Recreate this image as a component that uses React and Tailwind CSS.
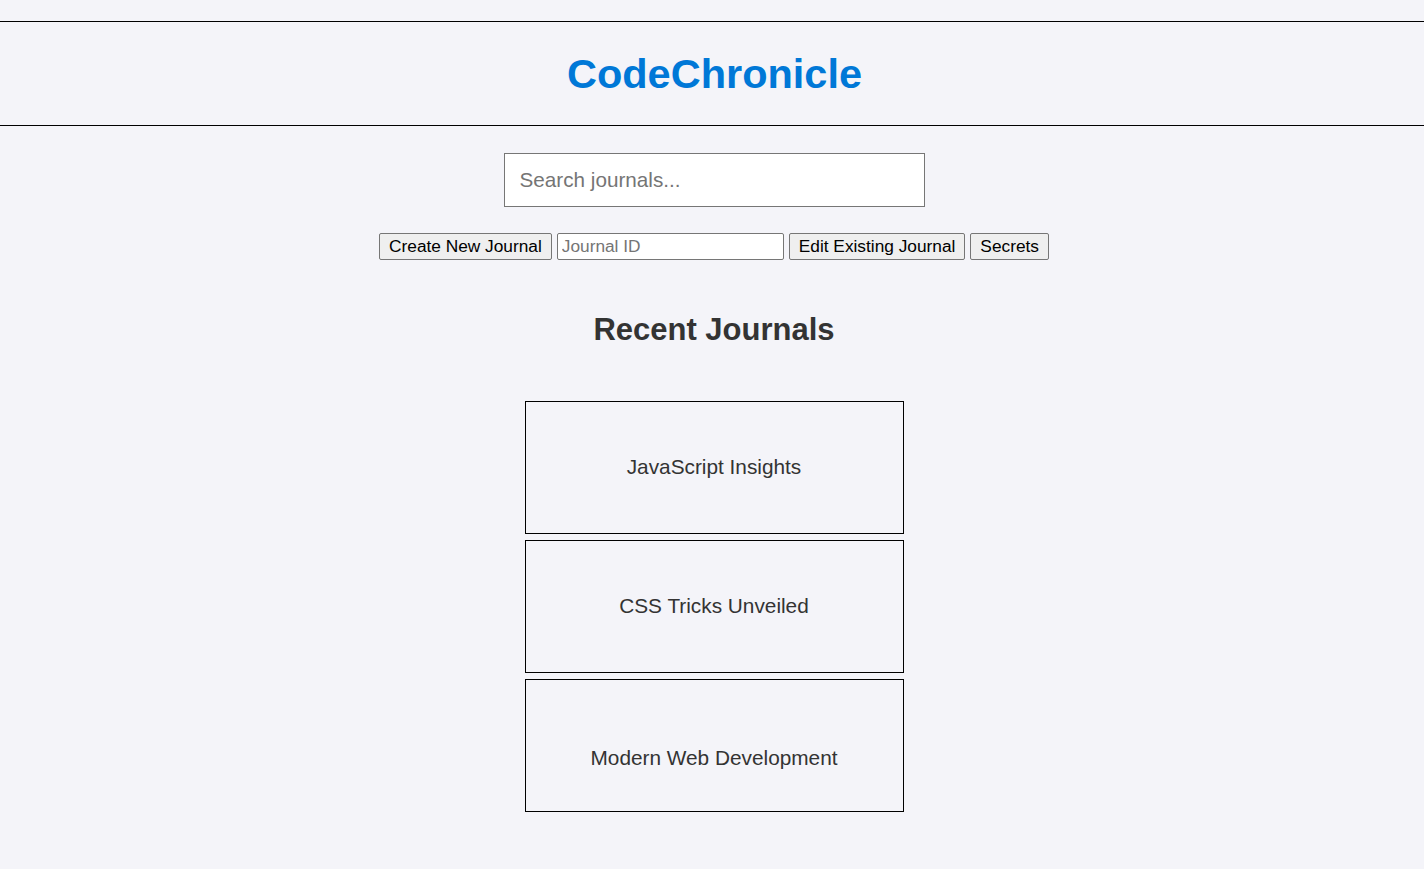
import React from "react";

const journals = [
  { id: 1, title: "JavaScript Insights" },
  { id: 2, title: "CSS Tricks Unveiled" },
  { id: 3, title: "Modern Web Development", low: true },
];

const App = () => {
  return (
    <div className="min-h-[869px] bg-[#f4f4f9] pt-[21px] font-['Liberation_Sans',Arial,sans-serif]">
      {/* header */}
      <header className="h-[105px] border-y border-black flex items-center justify-center">
        <h1 className="ml-[5px] text-[41.5px] font-bold text-[#0078d7] leading-none">CodeChronicle</h1>
      </header>

      <main className="pl-[4px]">
        {/* search */}
        <div className="mt-[27px] flex justify-center">
          <input
            type="text"
            placeholder="Search journals..."
            className="w-[421px] h-[54px] bg-white border border-[#767676] px-[15px] text-[20.7px] text-black placeholder:text-[#757575] outline-none"
          />
        </div>

        {/* actions */}
        <div className="mt-[26px] flex justify-center items-center gap-[5px] text-[17.3px] text-black">
          <button className="h-[27px] px-[9px] bg-[#efefef] border border-[#767676] rounded-[2px] leading-none">
            Create New Journal
          </button>
          <input
            type="text"
            placeholder="Journal ID"
            className="w-[227px] h-[27px] bg-white border border-[#767676] rounded-[2px] px-[4px] placeholder:text-[#757575] outline-none"
          />
          <button className="h-[27px] px-[9px] bg-[#efefef] border border-[#767676] rounded-[2px] leading-none">
            Edit Existing Journal
          </button>
          <button className="h-[27px] px-[9px] bg-[#efefef] border border-[#767676] rounded-[2px] leading-none">
            Secrets
          </button>
        </div>

        <h2 className="mt-[52px] text-center text-[31px] leading-[36px] font-bold text-[#333]">Recent Journals</h2>

        {/* journal list */}
        <div className="mt-[53px] flex flex-col items-center gap-[6px]">
          {journals.map((j) => (
            <div
              key={j.id}
              className={`w-[379px] h-[133px] border border-black flex items-center justify-center text-[20.8px] text-[#333] ${
                j.low ? "pt-[25px]" : "pb-[1px]"
              }`}
            >
              {j.title}
            </div>
          ))}
        </div>
      </main>
    </div>
  );
};

export default App;
